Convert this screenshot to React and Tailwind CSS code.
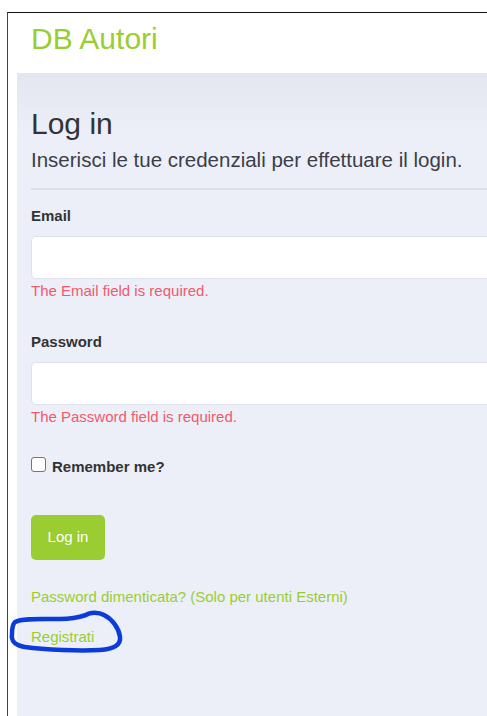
import { useState } from 'react'

function Field({ label, type, error, className = '' }) {
  const [value, setValue] = useState('')

  return (
    <div className={className}>
      <label className="block text-[15px] font-bold leading-[20px] text-[#333]">{label}</label>
      <input
        type={type}
        value={value}
        onChange={e => setValue(e.target.value)}
        className="mt-[10px] block h-[43px] w-[560px] rounded-[5px] border border-[#dfe2ea] bg-white px-3 outline-none"
      />
      <p className="mt-[2px] text-[15px] leading-[20px] text-[#f2596d]">{error}</p>
    </div>
  )
}

export default function App() {
  const [remember, setRemember] = useState(false)

  return (
    <div className="relative flex h-[716px] w-[487px] flex-col overflow-hidden bg-white font-['Liberation_Sans',Arial,sans-serif]">
      {/* tail of the caption line above the frame */}
      <div className="flex h-[12px] shrink-0 flex-col overflow-hidden">
        <p className="-mt-[22px] whitespace-nowrap pl-[14px] text-[19px] leading-[19px] text-black">
          Esempio schermata login
        </p>
      </div>

      <div className="ml-[7px] flex flex-1 flex-col border-l border-t border-l-[#444] border-t-[#111]">
        <header className="pl-[23px] pt-[9px]">
          <span className="text-[30px] leading-[34px] text-[#9acd32]">DB Autori</span>
        </header>

        <main className="ml-[9px] mt-[17px] w-[600px] flex-1 bg-linear-to-b from-[#e3e5ef] to-[#eceff8] to-[60px] pl-[14px]">
          <h1 className="pt-[33px] text-[30px] leading-[36px] text-[#333]">Log in</h1>
          <p className="mt-[6px] text-[20.5px] leading-[24px] text-[#3b3e48]">
            Inserisci le tue credenziali per effettuare il login.
          </p>
          <div className="mt-[16px] h-[2px] bg-[#dcdfe8]" />

          <Field className="mt-[16px]" label="Email" type="email" error="The Email field is required." />
          <Field className="mt-[31px]" label="Password" type="password" error="The Password field is required." />

          <label className="mt-[30px] flex items-start gap-[6px]">
            <input
              type="checkbox"
              checked={remember}
              onChange={e => setRemember(e.target.checked)}
              className="h-[15px] w-[15px] appearance-none rounded-[3px] border-[1.5px] border-[#737373] bg-white"
            />
            <span className="text-[15px] font-bold leading-[20px] text-[#333]">Remember me?</span>
          </label>

          <button className="mt-[38px] flex h-[45px] w-[74px] items-center justify-center rounded-[5px] bg-[#9acd32] text-[15px] text-white">
            Log in
          </button>

          <a href="#" className="mt-[27px] block text-[15px] leading-[20px] text-[#9acd32]">
            Password dimenticata? (Solo per utenti Esterni)
          </a>
          <a href="#" className="mt-[20px] block text-[15px] leading-[20px] text-[#9acd32]">
            Registrati
          </a>
        </main>
      </div>

      {/* pen ring round the sign-up link */}
      <svg className="pointer-events-none absolute left-0 top-[605px]" width="130" height="55" viewBox="0 0 130 55" fill="none">
        <path
          d="M15,17 C22,13 40,14 60,14 C72,14 80,12 86,10 C90,7 99,7 104,10 C112,14 119,23 120,32 C121,40 114,44 100,45 C80,46 45,45 25,42 C14,40 11,36 12,29 C12,23 13,19 15,17 Z"
          stroke="#0b3cd9"
          strokeWidth="4.5"
          strokeLinecap="round"
          strokeLinejoin="round"
        />
      </svg>
    </div>
  )
}
